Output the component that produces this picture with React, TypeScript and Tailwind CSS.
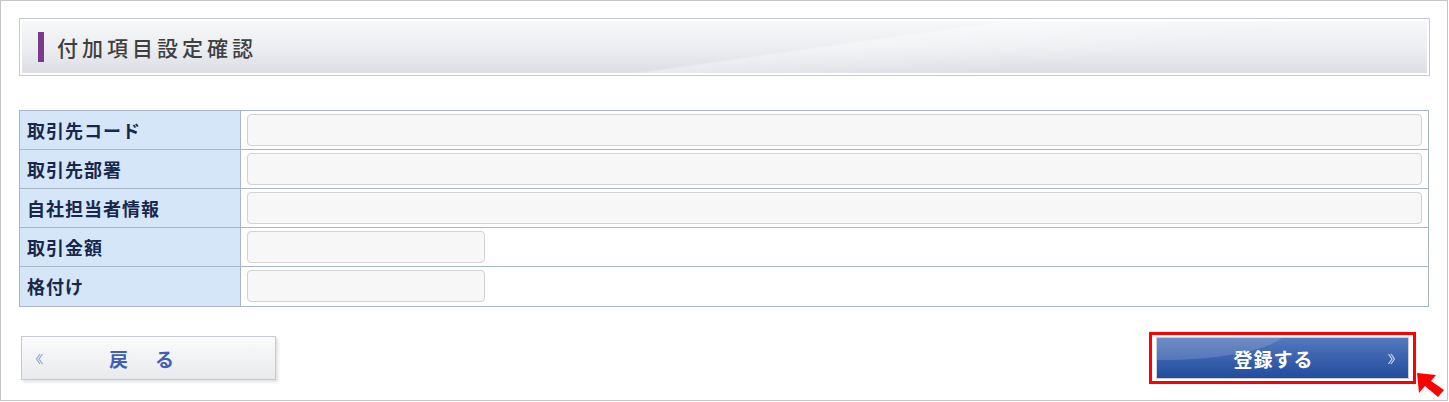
import React from "react";

const font = { fontFamily: '"Noto Sans CJK JP", "Noto Sans", sans-serif' };

type Row = { label: string; short?: boolean };
const rows: Row[] = [
  { label: "取引先コード" },
  { label: "取引先部署" },
  { label: "自社担当者情報" },
  { label: "取引金額", short: true },
  { label: "格付け", short: true },
];

export default function App() {
  return (
    <div className="w-[1449px] h-[402px] bg-white" style={font}>
      <div className="relative w-[1448px] h-[401px] border border-[#c4c4c4] pl-[18px] pr-[17px] pt-[17px] bg-white">
        {/* Header */}
        <div className="h-[58px] border border-[#c6cad8] p-px">
          <div className="relative h-full flex items-center pl-[16px] border border-white bg-gradient-to-b from-[#f6f7f9] via-[#eceef1] to-[#dcdee4] overflow-hidden">
            <div className="absolute inset-0 bg-[linear-gradient(172deg,rgba(255,255,255,0.0)_0%,rgba(255,255,255,0.0)_55%,rgba(255,255,255,0.35)_56%,rgba(255,255,255,0)_75%)]" />
            <div className="relative w-[6px] h-[30px] bg-[#7a3a8c]" />
            <div className="relative ml-[13px] text-[21px] font-medium leading-none tracking-[4px] text-[#3f3f3f]">
              付加項目設定確認
            </div>
          </div>
        </div>

        {/* Table */}
        <div className="mt-[34px] w-[1410px] border border-[#a9b5c8]">
          {rows.map((r, i) => (
            <div
              key={r.label}
              className={`flex h-[39px] ${i < rows.length - 1 ? "border-b border-[#a9b5c8]" : "h-[38px]"}`}
            >
              <div className="w-[221px] shrink-0 border-r border-[#a9b5c8] bg-[#d4e6f8] pl-[7px] flex items-center text-[18px] font-bold text-[#18274c] tracking-[1px]">
                {r.label}
              </div>
              <div className="flex-1 pl-[6px] pr-[6px] pt-[3px]">
                <div
                  className={`h-[32px] rounded-[4px] border border-[#d2d2d2] bg-[#f7f7f7] ${r.short ? "w-[238px]" : "w-full"}`}
                />
              </div>
            </div>
          ))}
        </div>

        {/* Buttons */}
        <div className="mt-[25px] flex items-center justify-between">
          <button className="ml-[2px] relative w-[255px] h-[44px] border border-[#c6c9d3] bg-gradient-to-b from-[#fbfbfc] to-[#e9eaed] shadow-[2px_2px_3px_rgba(0,0,0,0.12)] flex items-center">
            <svg className="absolute left-[14px] top-[16px]" width="8" height="12" viewBox="0 0 8 12">
              <path d="M4 1 L0.5 6 L4 11 M6.5 1 L3 6 L6.5 11" stroke="#8ea6dc" strokeWidth="1.2" fill="none" />
            </svg>
            <span className="absolute left-[87px] text-[19px] font-bold text-[#3d5fb6] leading-none">戻</span>
            <span className="absolute left-[133px] text-[19px] font-bold text-[#3d5fb6] leading-none">る</span>
          </button>

          <div className="mr-[14px] border-[3px] border-[#ff0000] px-[4px] py-[2px] bg-white">
            <button className="relative w-[253px] h-[42px] border border-[#c9cfdc] p-0 overflow-hidden bg-gradient-to-b from-[#5379bd] via-[#3a62ad] to-[#214d9d] flex items-center justify-center">
              <div className="absolute -left-[120px] -top-[40px] w-[250px] h-[62px] rounded-[50%] bg-white/15" />
              <span className="relative -ml-[18px] text-[19px] font-bold text-white tracking-[1px] leading-none">登録する</span>
              <svg className="absolute right-[13px] top-[15px]" width="8" height="12" viewBox="0 0 8 12">
                <path d="M1.5 1 L5 6 L1.5 11 M4 1 L7.5 6 L4 11" stroke="#c9d6f2" strokeWidth="1.2" fill="none" />
              </svg>
            </button>
          </div>
        </div>

        {/* Red pointer arrow */}
        <svg className="absolute left-[1414px] top-[370px]" width="32" height="28" viewBox="0 0 32 28">
          <polygon points="2,2 21,4 16,10 29,19 23,26 10,15 4,22" fill="#ff0000" />
        </svg>
      </div>
    </div>
  );
}
